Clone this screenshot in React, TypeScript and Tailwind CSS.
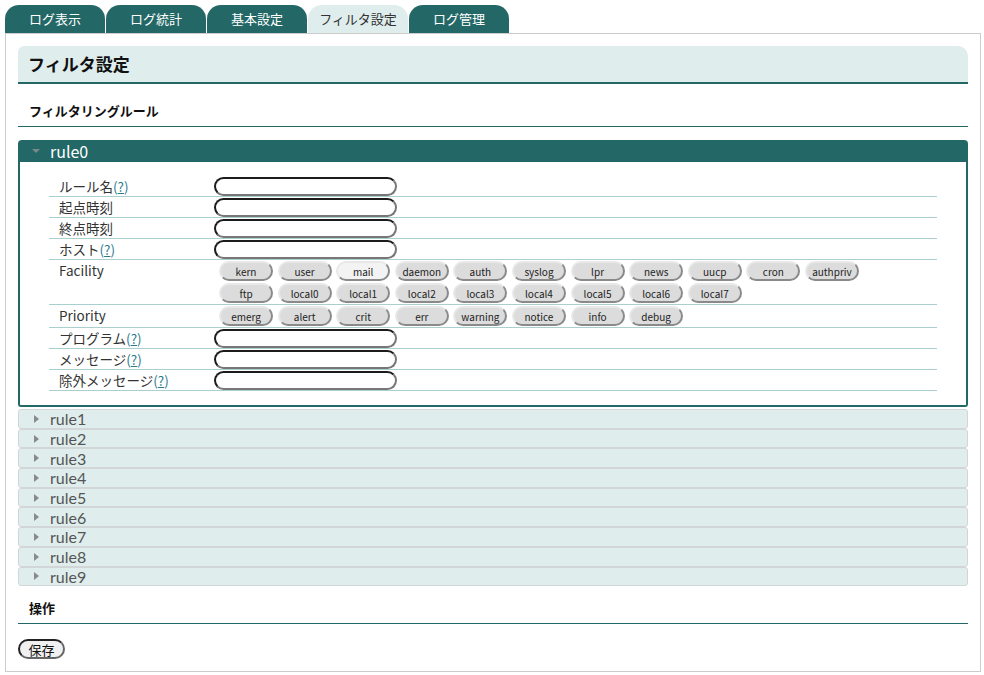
import React from 'react'

const tabs = ['ログ表示', 'ログ統計', '基本設定', 'フィルタ設定', 'ログ管理']
const facilities = ['kern', 'user', 'mail', 'daemon', 'auth', 'syslog', 'lpr', 'news', 'uucp', 'cron', 'authpriv', 'ftp', 'local0', 'local1', 'local2', 'local3', 'local4', 'local5', 'local6', 'local7']
const priorities = ['emerg', 'alert', 'crit', 'err', 'warning', 'notice', 'info', 'debug']

function Help() {
  return (
    <span className="text-[#2a7a8a]">
      (<span className="underline">?</span>)
    </span>
  )
}

function TextInput() {
  return (
    <div className="w-[183px] h-[19px] rounded-full bg-white border-2 border-t-[#1c1c1c] border-l-[#1c1c1c] border-b-[#777] border-r-[#777]" />
  )
}

function Pill({ label, light }: { label: string; light?: boolean }) {
  return (
    <div
      className={`w-[54px] h-[20px] rounded-full flex items-center justify-center text-[10px] text-[#222] border-2 border-t-[#e8e8e8] border-l-[#e8e8e8] border-b-[#8a8a8a] border-r-[#8a8a8a] ${light ? 'bg-[#f3f3f3]' : 'bg-[#dcdcdc]'}`}
    >
      {label}
    </div>
  )
}

function Row({ label, children, tall }: { label: React.ReactNode; children: React.ReactNode; tall?: boolean }) {
  return (
    <div className={`flex border-b border-[#a9d0cf] ${tall ? '' : 'h-[21px]'}`}>
      <div className="w-[165px] pl-[10px] leading-[20px] text-[13.5px] text-[#333]">{label}</div>
      <div className="flex-1 flex items-start pt-[1px]">{children}</div>
    </div>
  )
}

export default function App() {
  return (
    <div
      className="w-[984px] h-[675px] bg-white pt-[5px] pl-[5px] pr-[3px]"
      style={{ fontFamily: '"Noto Sans CJK JP", "Noto Sans", sans-serif' }}
    >
      {/* tabs */}
      <div className="flex gap-[1px]">
        {tabs.map((t) => (
          <div
            key={t}
            className={`w-[100px] h-[28px] rounded-t-[14px] flex items-center justify-center text-[13px] pb-[1px] ${t === 'フィルタ設定' ? 'bg-[#dfeded] text-[#333]' : 'bg-[#236866] text-white'}`}
          >
            {t}
          </div>
        ))}
      </div>

      {/* panel */}
      <div className="border border-[#cccccc] h-[639px] px-[12px] pt-[12px]">
        <div className="h-[38px] bg-[#dfeded] rounded-tr-[10px] rounded-tl-[6px] border-b-2 border-[#236866] flex items-center pl-[10px]">
          <span className="text-[17px] font-bold text-[#111]">フィルタ設定</span>
        </div>

        <div className="mt-[16px] pl-[11px] pb-[4px] border-b border-[#236866] text-[13px] font-bold leading-[22px] text-[#111]">
          フィルタリングルール
        </div>

        {/* rule0 */}
        <div className="mt-[13px]">
          <div className="h-[22px] bg-[#236866] rounded-t-[4px] flex items-center">
            <svg width="8" height="6" viewBox="0 0 8 6" className="ml-[14px]">
              <path d="M0 1 L8 1 L4 5 Z" fill="#7a8a8a" />
            </svg>
            <span className="ml-[10px] text-[16px] text-white leading-[20px]">rule0</span>
          </div>
          <div className="border-2 border-t-0 border-[#236866] rounded-b-[3px] px-[29px] pt-[14px] pb-[14px]">
            <Row label={<>ルール名<Help /></>}><TextInput /></Row>
            <Row label="起点時刻"><TextInput /></Row>
            <Row label="終点時刻"><TextInput /></Row>
            <Row label={<>ホスト<Help /></>}><TextInput /></Row>
            <Row label="Facility" tall>
              <div className="flex flex-wrap gap-x-[4.6px] gap-y-[2px] pl-[5px] pb-[1px] w-[650px]">
                {facilities.map((f) => (
                  <Pill key={f} label={f} light={f === 'mail'} />
                ))}
              </div>
            </Row>
            <Row label="Priority" tall>
              <div className="flex flex-wrap gap-x-[4.6px] pl-[5px] pb-[1px]">
                {priorities.map((p) => (
                  <Pill key={p} label={p} />
                ))}
              </div>
            </Row>
            <Row label={<>プログラム<Help /></>}><TextInput /></Row>
            <Row label={<>メッセージ<Help /></>}><TextInput /></Row>
            <Row label={<>除外メッセージ<Help /></>}><TextInput /></Row>
          </div>
        </div>

        {/* collapsed rules */}
        <div className="mt-[2px]">
          {[1, 2, 3, 4, 5, 6, 7, 8, 9].map((n) => (
            <div
              key={n}
              className="h-[19.7px] bg-[#dfeded] border border-[#d2d6d6] rounded-[3px] flex items-center"
            >
              <svg width="5" height="8" viewBox="0 0 5 8" className="ml-[15px]">
                <path d="M0 0 L5 4 L0 8 Z" fill="#8a8a8a" />
              </svg>
              <span className="ml-[11px] text-[16px] text-[#555] leading-[17px] font-['Lato',sans-serif]">{`rule${n}`}</span>
            </div>
          ))}
        </div>

        <div className="mt-[11px] pl-[11px] pb-[4px] border-b border-[#236866] text-[13px] font-bold leading-[22px] text-[#111]">
          操作
        </div>

        <button className="mt-[15px] w-[47px] h-[20px] rounded-full bg-[#f0f0f0] border-2 border-t-[#222] border-l-[#222] border-b-[#666] border-r-[#666] text-[13px] text-[#111] flex items-center justify-center leading-none">
          保存
        </button>
      </div>
    </div>
  )
}
